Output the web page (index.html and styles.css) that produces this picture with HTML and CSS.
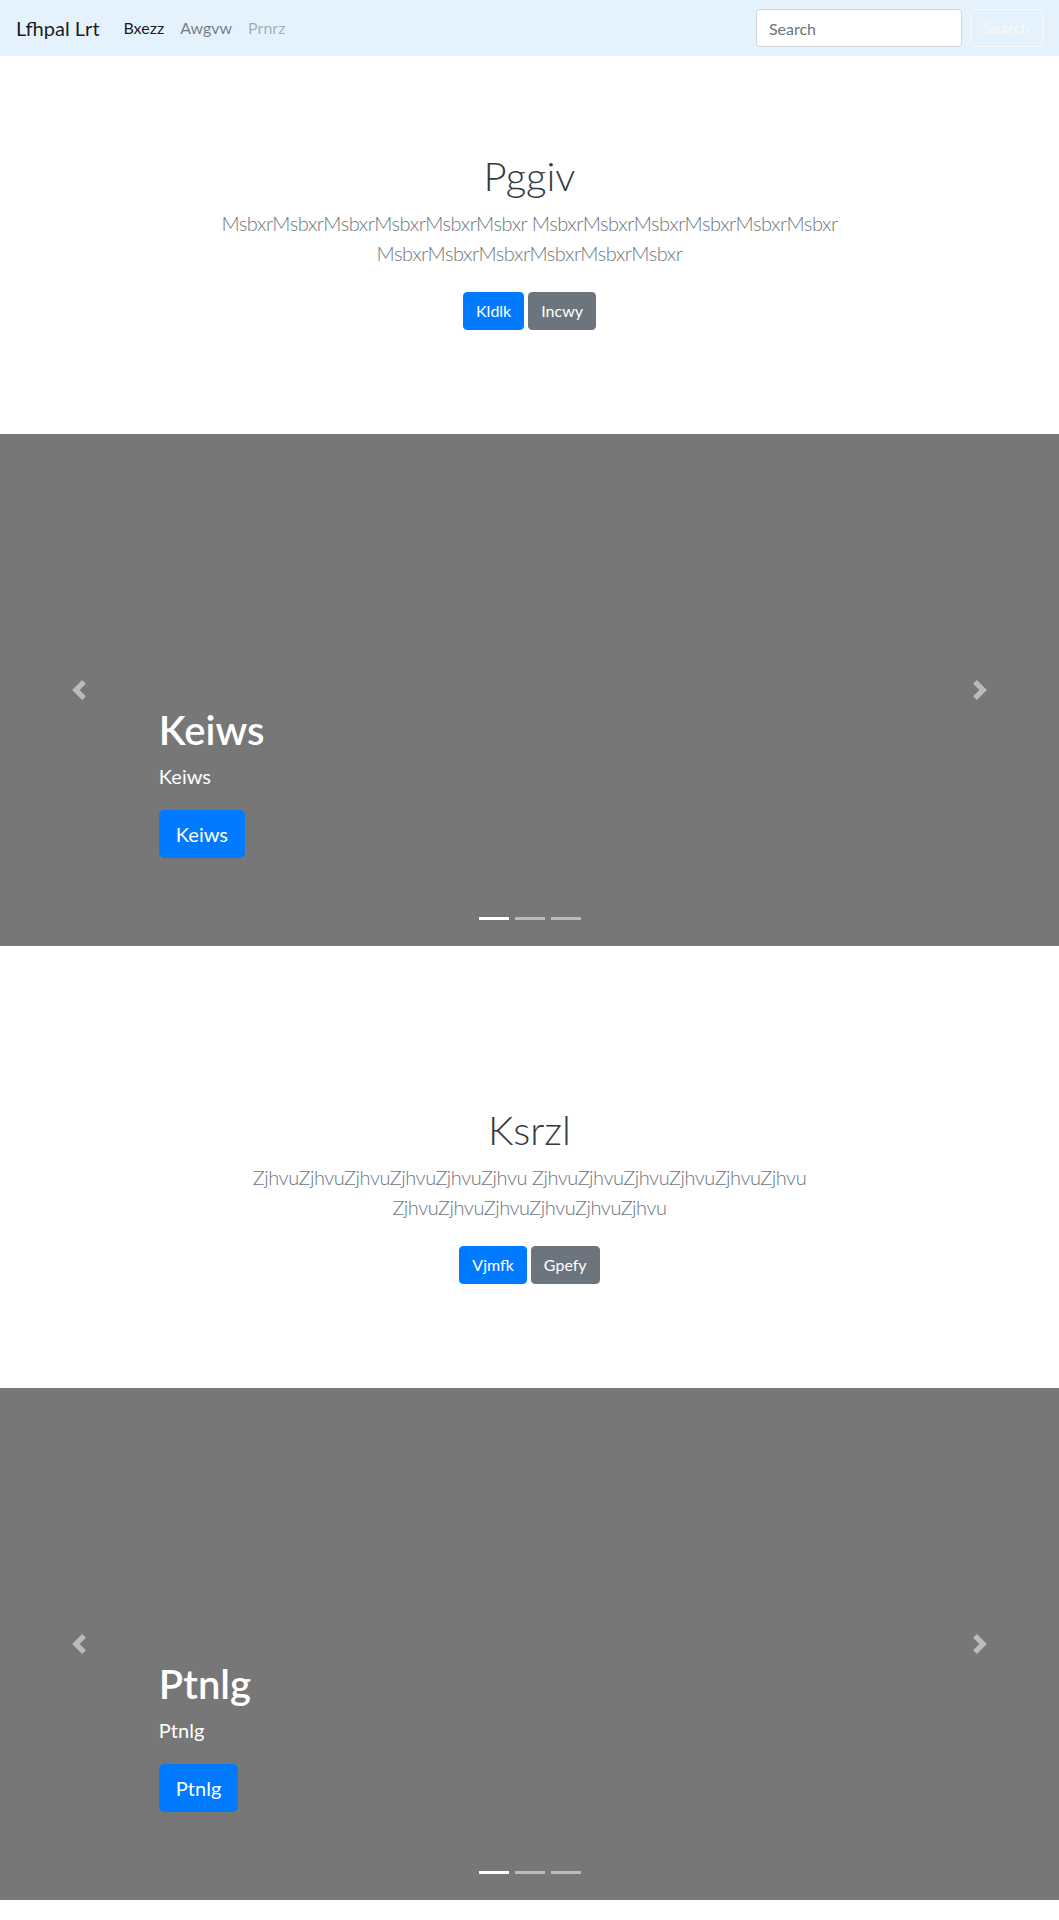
FILE: index.html
```html
<!DOCTYPE html>
<html lang="en">
<head>
<meta charset="utf-8">
<title>Lfhpal Lrt</title>
<link rel="stylesheet" href="styles.css">
</head>
<body>
<header>
  <nav class="navbar">
    <a class="brand" href="#">Lfhpal Lrt</a>
    <ul class="nav">
      <li><a class="nav-link active" href="#">Bxezz</a></li>
      <li><a class="nav-link" href="#">Awgvw</a></li>
      <li><a class="nav-link disabled" href="#">Prnrz</a></li>
    </ul>
    <form class="search">
      <input class="search-input" type="search" placeholder="Search">
      <button class="search-btn" type="button">Search</button>
    </form>
  </nav>
</header>
<main>
  <section class="hero">
    <h1 class="hero-title">Pggiv</h1>
    <p class="lead">MsbxrMsbxrMsbxrMsbxrMsbxrMsbxr MsbxrMsbxrMsbxrMsbxrMsbxrMsbxr MsbxrMsbxrMsbxrMsbxrMsbxrMsbxr</p>
    <div class="actions">
      <a class="btn btn-primary" href="#">Kldlk</a>
      <a class="btn btn-secondary" href="#">Incwy</a>
    </div>
  </section>

  <div class="carousel">
    <div class="caption">
      <h1 class="caption-title">Keiws</h1>
      <p class="caption-text">Keiws</p>
      <div class="caption-action"><a class="btn btn-lg btn-primary" href="#">Keiws</a></div>
    </div>
    <a class="control prev" href="#"><svg width="20" height="20" viewBox="0 0 8 8"><path d="M5.25 0l-4 4 4 4 1.5-1.5L4.25 4l2.5-2.5L5.25 0z" fill="#fff"/></svg></a>
    <a class="control next" href="#"><svg width="20" height="20" viewBox="0 0 8 8"><path d="M2.75 0l-1.5 1.5L3.75 4l-2.5 2.5L2.75 8l4-4-4-4z" fill="#fff"/></svg></a>
    <ol class="indicators"><li class="active"></li><li></li><li></li></ol>
  </div>

  <section class="hero">
    <h1 class="hero-title">Ksrzl</h1>
    <p class="lead">ZjhvuZjhvuZjhvuZjhvuZjhvuZjhvu ZjhvuZjhvuZjhvuZjhvuZjhvuZjhvu ZjhvuZjhvuZjhvuZjhvuZjhvuZjhvu</p>
    <div class="actions">
      <a class="btn btn-primary" href="#">Vjmfk</a>
      <a class="btn btn-secondary" href="#">Gpefy</a>
    </div>
  </section>

  <div class="carousel">
    <div class="caption">
      <h1 class="caption-title">Ptnlg</h1>
      <p class="caption-text">Ptnlg</p>
      <div class="caption-action"><a class="btn btn-lg btn-primary" href="#">Ptnlg</a></div>
    </div>
    <a class="control prev" href="#"><svg width="20" height="20" viewBox="0 0 8 8"><path d="M5.25 0l-4 4 4 4 1.5-1.5L4.25 4l2.5-2.5L5.25 0z" fill="#fff"/></svg></a>
    <a class="control next" href="#"><svg width="20" height="20" viewBox="0 0 8 8"><path d="M2.75 0l-1.5 1.5L3.75 4l-2.5 2.5L2.75 8l4-4-4-4z" fill="#fff"/></svg></a>
    <ol class="indicators"><li class="active"></li><li></li><li></li></ol>
  </div>
</main>
</body>
</html>
```

FILE: styles.css
```css
* { box-sizing: border-box; }

body {
  margin: 0;
  font-family: "Segoe UI", Lato, "Noto Sans", sans-serif;
  font-size: 16px;
  line-height: 1.5;
  color: #212529;
  background: #fff;
}

a { text-decoration: none; }

/* Navbar */
.navbar {
  display: flex;
  align-items: center;
  height: 56px;
  padding: 8px 16px;
  background: #e3f2fd;
}
.brand {
  font-size: 20px;
  line-height: 30px;
  padding: 5px 0;
  margin-right: 16px;
  color: rgba(0, 0, 0, 0.9);
}
.nav {
  display: flex;
  flex: 1;
  list-style: none;
  margin: 0;
  padding: 0;
}
.nav-link {
  display: block;
  padding: 8px;
  color: rgba(0, 0, 0, 0.5);
}
.nav-link.active { color: rgba(0, 0, 0, 0.9); }
.nav-link.disabled { color: rgba(0, 0, 0, 0.3); }

.search { display: flex; align-items: center; margin: 0; }
.search-input {
  width: 206px;
  height: 38px;
  padding: 6px 12px;
  margin-right: 8px;
  font: inherit;
  color: #495057;
  background: #fff;
  border: 1px solid #ced4da;
  border-radius: 4px;
}
.search-input::placeholder { color: #6c757d; }
.search-btn {
  height: 38px;
  padding: 6px 12px;
  font: inherit;
  color: #f8f9fa;
  background: transparent;
  border: 1px solid #f8f9fa;
  border-radius: 4px;
}

/* Hero */
.hero {
  padding: 96px 16px;
  text-align: center;
}
.hero-title {
  margin: 0 0 8px;
  font-size: 40px;
  line-height: 48px;
  font-weight: 300;
  color: #343a40;
}
.lead {
  max-width: 700px;
  margin: 0 auto 16px;
  font-size: 20px;
  line-height: 30px;
  font-weight: 300;
  letter-spacing: -0.45px;
  color: #6c757d;
}
.actions {
  display: flex;
  justify-content: center;
  gap: 4px;
  padding: 8px 0;
}

/* Buttons */
.btn {
  display: inline-block;
  padding: 6px 12px;
  font-size: 16px;
  line-height: 24px;
  border: 1px solid transparent;
  border-radius: 4px;
  color: #fff;
}
.btn-primary { background: #007bff; border-color: #007bff; }
.btn-secondary { background: #6c757d; border-color: #6c757d; }
.btn-lg {
  padding: 8px 16px;
  font-size: 20px;
  line-height: 30px;
  border-radius: 5px;
}

/* Carousel */
.carousel {
  position: relative;
  display: flex;
  align-items: flex-end;
  height: 512px;
  margin-bottom: 64px;
  padding: 0 15% 48px;
  background: #777;
  color: #fff;
}
.caption { padding: 20px 0; }
.caption-title {
  margin: 0 0 8px;
  font-size: 40px;
  line-height: 48px;
  font-weight: 600;
}
.caption-text {
  margin: 0 0 20px;
  font-size: 20px;
  line-height: 28px;
}
.caption-action { display: flex; margin-bottom: 20px; }

.control {
  position: absolute;
  top: 0;
  bottom: 0;
  width: 15%;
  display: flex;
  align-items: center;
  justify-content: center;
  opacity: 0.5;
}
.control.prev { left: 0; }
.control.next { right: 0; }
.control svg { display: block; }

.indicators {
  position: absolute;
  left: 15%;
  right: 15%;
  bottom: 0;
  display: flex;
  justify-content: center;
  list-style: none;
  margin: 0 0 16px;
  padding: 0;
}
.indicators li {
  width: 30px;
  height: 3px;
  margin: 0 3px;
  box-sizing: content-box;
  border-top: 10px solid transparent;
  border-bottom: 10px solid transparent;
  background: #fff;
  background-clip: padding-box;
  opacity: 0.5;
}
.indicators li.active { opacity: 1; }
```
